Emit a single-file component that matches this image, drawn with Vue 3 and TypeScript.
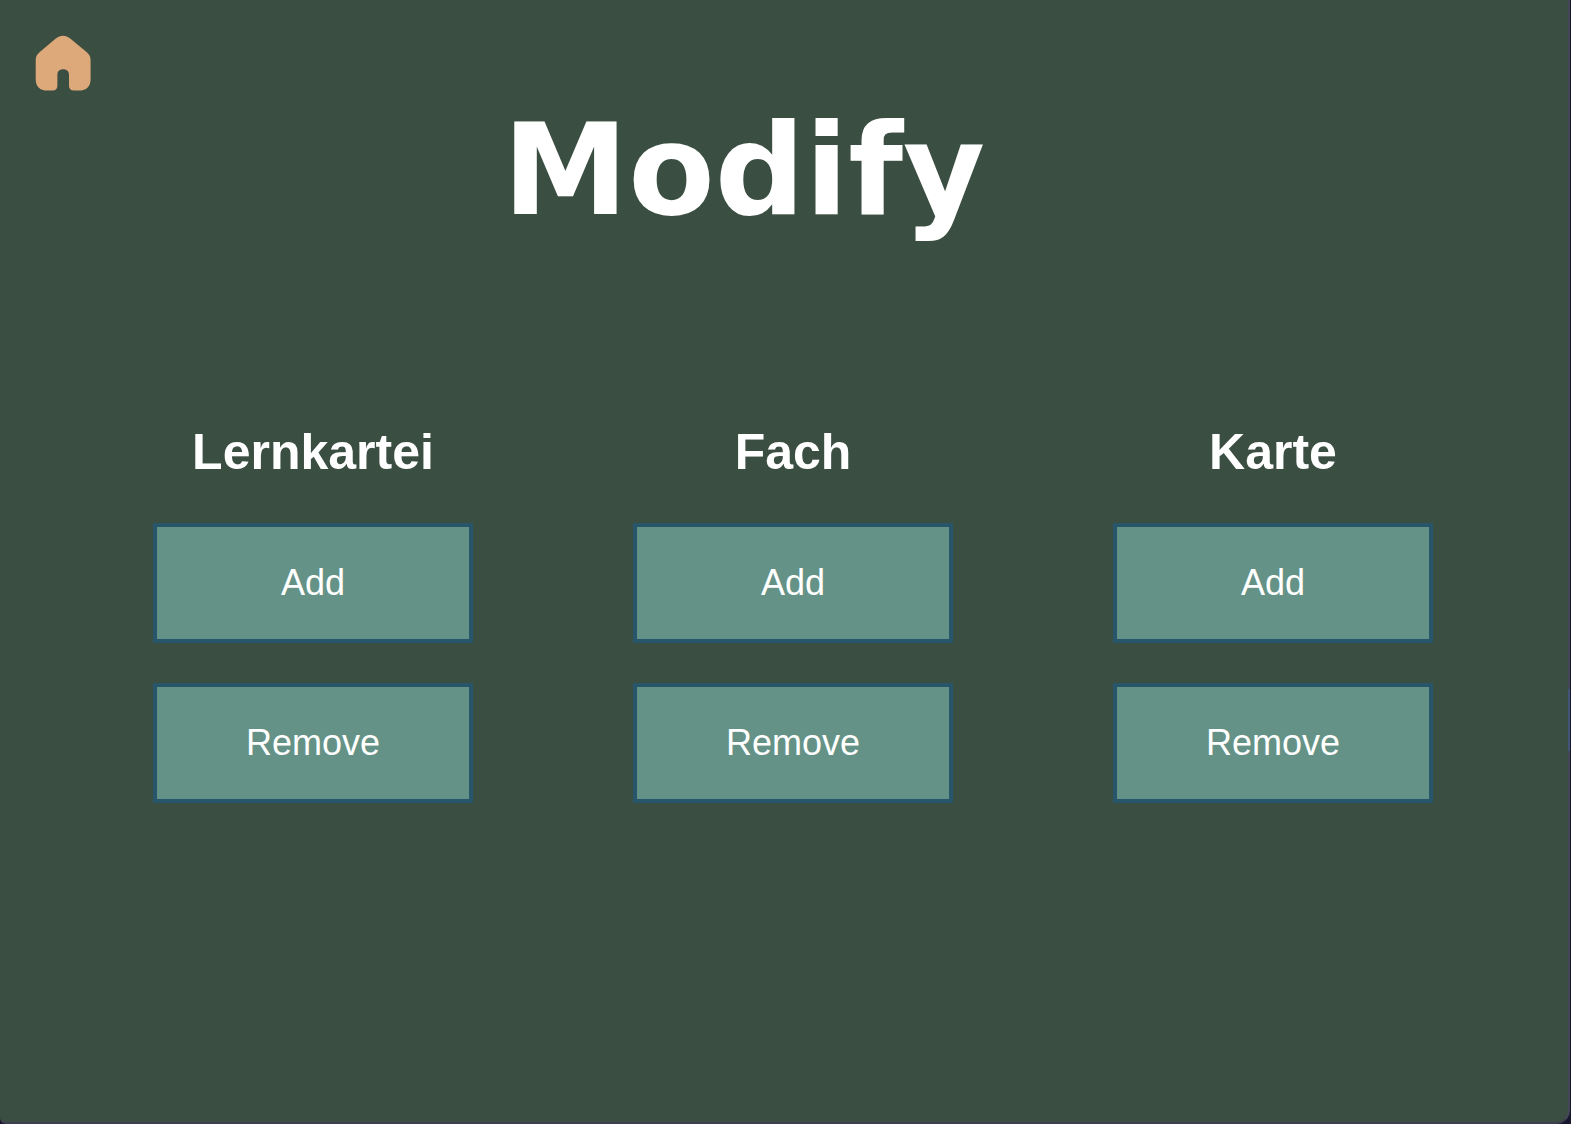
<script setup lang="ts">
interface Section {
  id: string
  label: string
}

const sections: Section[] = [
  { id: 'lernkartei', label: 'Lernkartei' },
  { id: 'fach', label: 'Fach' },
  { id: 'karte', label: 'Karte' },
]

const actions: string[] = ['Add', 'Remove']
</script>

<template>
  <div class="window">
    <nav class="nav">
      <button class="home" type="button" aria-label="Home">
        <svg viewBox="0 0 56 56" width="56" height="56" aria-hidden="true">
          <path
            d="M20.5 3.8C25.5 -0.2 30.5 -0.2 35.5 3.8L51.5 17C54.6 19.6 55.6 21.6 55.6 25.5V44C55.6 51.5 51.5 55.6 44 55.6H39C35.6 55.6 34 54 34 50.5V40C34 36.4 31.8 34.3 28.2 34.3C24.6 34.3 22.4 36.4 22.4 40V50.5C22.4 54 20.8 55.6 17.4 55.6H12.3C4.8 55.6 0.7 51.5 0.7 44V25.5C0.7 21.6 1.7 19.6 4.8 17Z"
          />
        </svg>
      </button>
    </nav>
    <h1 class="title">Modify</h1>
    <main class="sections">
      <section v-for="s in sections" :key="s.id" class="section" :aria-labelledby="s.id">
        <h2 :id="s.id" class="label">{{ s.label }}</h2>
        <div class="actions">
          <button v-for="a in actions" :key="a" class="action" type="button">{{ a }}</button>
        </div>
      </section>
    </main>
  </div>
</template>

<style>
body {
  margin: 0;
  background: #17182d;
}
</style>

<style scoped>
.window {
  position: relative;
  box-sizing: border-box;
  min-height: 100vh;
  margin-right: 1px;
  padding-top: 35px;
  border-right: 2px solid #44475a;
  border-bottom: 2px solid #403f51;
  border-radius: 0 0 14px 6px;
  background: #3b4e42;
  color: #fff;
  font-family: "Liberation Sans", Arial, sans-serif;
}

/* Highlighted stretch of the window edge */
.window::after {
  content: "";
  position: absolute;
  top: 689px;
  right: -2px;
  width: 2px;
  height: 62px;
  background: #43547a;
}

.nav {
  display: flex;
  padding-left: 35px;
}

.home {
  display: block;
  padding: 0;
  border: 0;
  background: none;
  cursor: pointer;
}

.home svg {
  display: block;
  fill: #dea97a;
}

.title {
  margin: 16px 80px 188px 0;
  font-family: Verdana, "DejaVu Sans", sans-serif;
  font-size: 126px;
  font-weight: 700;
  line-height: 128px;
  text-align: center;
}

.sections {
  display: grid;
  grid-template-columns: repeat(3, 1fr);
  column-gap: 160px;
  padding: 0 135px 0 153px;
}

.label {
  margin: 0 0 42px;
  font-size: 50px;
  font-weight: 700;
  line-height: 58px;
  text-align: center;
}

.actions {
  display: grid;
  gap: 40px;
}

.action {
  height: 120px;
  padding: 0;
  border: 4px solid #27566b;
  background: #659287;
  color: #fff;
  font-family: inherit;
  font-size: 36px;
  line-height: 40px;
  cursor: pointer;
}
</style>
